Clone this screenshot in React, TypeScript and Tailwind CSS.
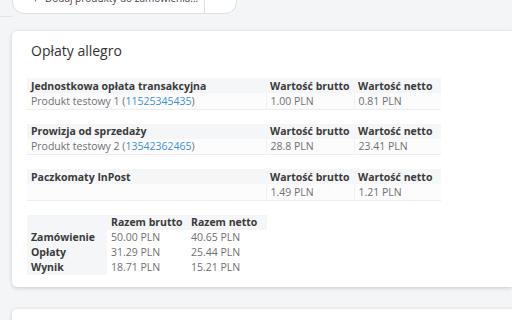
import { ChevronDown, Plus } from "lucide-react";

const feeTables = [
  {
    title: "Jednostkowa opłata transakcyjna",
    product: "Produkt testowy 1",
    offer: "11525345435",
    gross: "1.00 PLN",
    net: "0.81 PLN",
  },
  {
    title: "Prowizja od sprzedaży",
    product: "Produkt testowy 2",
    offer: "13542362465",
    gross: "28.8 PLN",
    net: "23.41 PLN",
  },
  {
    title: "Paczkomaty InPost",
    product: "",
    offer: "",
    gross: "1.49 PLN",
    net: "1.21 PLN",
  },
];

const summary = [
  { label: "Zamówienie", gross: "50.00 PLN", net: "40.65 PLN" },
  { label: "Opłaty", gross: "31.29 PLN", net: "25.44 PLN" },
  { label: "Wynik", gross: "18.71 PLN", net: "15.21 PLN" },
];

const App = () => {
  return (
    <div
      className="h-[320px] w-[512px] overflow-hidden bg-[#f4f5f7] text-[#333]"
      style={{ fontFamily: '"Open Sans", "Noto Sans", sans-serif' }}
    >
      <div className="relative h-[31px]">
        <div className="absolute left-0 top-[16px] h-px w-[12px] bg-[#e2e4e8]" />
        <div className="absolute left-[12px] top-[-16px] flex h-[30px] w-[225px] items-center rounded-[12px] border border-[#dcdfe3] bg-white text-[10px] text-[#444]">
          <div className="flex flex-1 items-center gap-[5px] truncate pb-[2px] pl-[18px]">
            <Plus className="h-[9px] w-[9px]" />
            <span>Dodaj produkty do zamówienia...</span>
          </div>
          <div className="flex h-full w-[32px] items-center justify-center border-l border-[#dcdfe3] pb-[2px]">
            <ChevronDown className="h-3 w-3 text-[#888]" />
          </div>
        </div>
      </div>

      <div className="ml-[12px] h-[256px] rounded-l-[5px] bg-white pl-[15px] pt-[10px] shadow-[0_1px_4px_rgba(0,0,0,0.18)]">
        <h2 className="pl-[4px] text-[14px] leading-[20px] text-[#333]">Opłaty allegro</h2>

        <div className="mt-[17px] flex flex-col gap-[14px]">
          {feeTables.map((t) => (
            <table key={t.title} className="w-[414px] border-collapse text-[10.5px] leading-[14px]">
              <thead>
                <tr className="bg-[#f5f6f8]">
                  <th className="w-[239px] px-[4px] py-[0.5px] text-left font-bold text-[#3a3a3a]">{t.title}</th>
                  <th className="w-[88px] px-[4px] text-left font-bold text-[#3a3a3a]">Wartość brutto</th>
                  <th className="px-[4px] text-left font-bold text-[#3a3a3a]">Wartość netto</th>
                </tr>
              </thead>
              <tbody>
                <tr className="border-b border-[#eceef1] bg-[#fcfcfd] text-[#707070]">
                  <td className="h-[16px] border-r border-[#f0f1f3] px-[4px]">
                    {t.product && (
                      <>
                        {t.product} (<span className="text-[#3b8fe0]">{t.offer}</span>)
                      </>
                    )}
                  </td>
                  <td className="border-r border-[#f0f1f3] px-[4px]">{t.gross}</td>
                  <td className="px-[4px]">{t.net}</td>
                </tr>
              </tbody>
            </table>
          ))}
        </div>

        <table className="mt-[14px] w-[240px] border-collapse text-[10.5px] leading-[15px]">
          <thead>
            <tr>
              <th className="w-[80px] bg-[#f5f6f8]" />
              <th className="w-[80px] bg-[#f5f6f8] px-[4px] py-0 text-left font-bold text-[#3a3a3a]">Razem brutto</th>
              <th className="bg-[#f5f6f8] px-[4px] text-left font-bold text-[#3a3a3a]">Razem netto</th>
            </tr>
          </thead>
          <tbody>
            {summary.map((r) => (
              <tr key={r.label} className="text-[#707070]">
                <th className="bg-[#f5f6f8] px-[4px] text-left font-bold text-[#3a3a3a]">{r.label}</th>
                <td className="px-[4px]">{r.gross}</td>
                <td className="px-[4px]">{r.net}</td>
              </tr>
            ))}
          </tbody>
        </table>
      </div>

      <div className="ml-[12px] mt-[22px] h-[40px] rounded-l-[5px] bg-white shadow-[0_1px_4px_rgba(0,0,0,0.18)]" />
    </div>
  );
};

export default App;
